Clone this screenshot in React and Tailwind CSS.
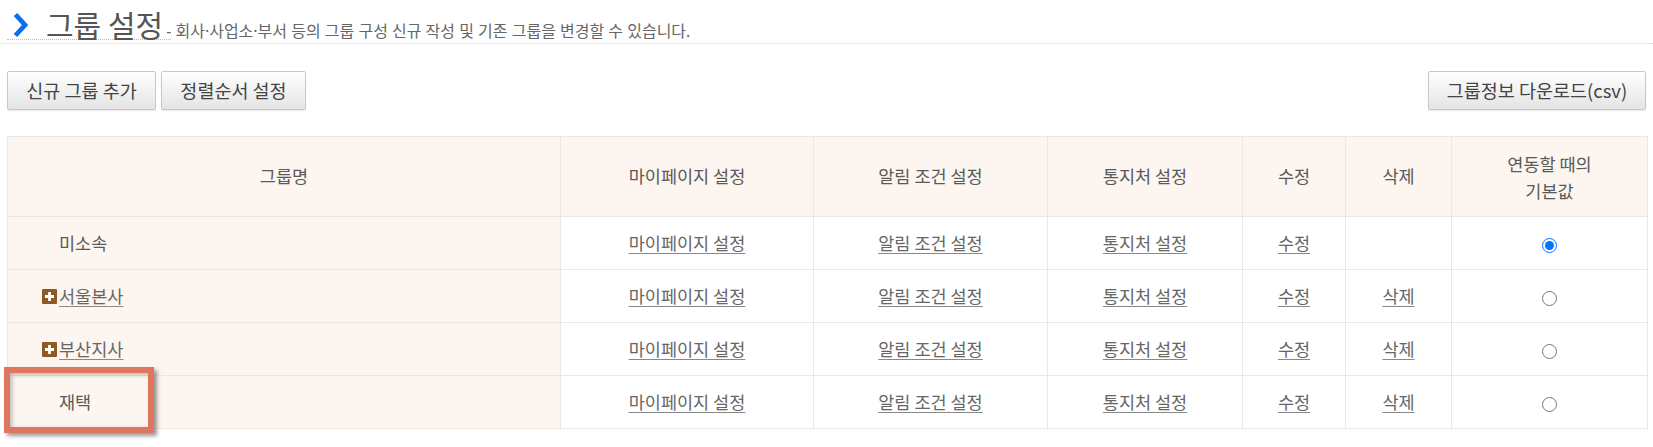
import React from 'react';

const rows = [
  { name: '미소속', hasChildren: false, link: false, canDelete: false, checked: true },
  { name: '서울본사', hasChildren: true, link: true, canDelete: true, checked: false },
  { name: '부산지사', hasChildren: true, link: true, canDelete: true, checked: false },
  { name: '재택', hasChildren: false, link: false, canDelete: true, checked: false, highlighted: true },
];

function PlusIcon() {
  return (
    <svg width="15" height="15" viewBox="0 0 15 15" className="shrink-0">
      <rect x="0" y="0" width="15" height="15" rx="1" fill="#8d5b22" />
      <path d="M7.5 3v9M3 7.5h9" stroke="#fff" strokeWidth="2.8" />
    </svg>
  );
}

function Chevron() {
  return (
    <svg width="15" height="26" viewBox="0 0 15 26" className="shrink-0">
      <path d="M2.5 2.5l9.5 10.5-9.5 10.5" fill="none" stroke="#0b6ef0" strokeWidth="4.8" strokeLinejoin="miter" />
    </svg>
  );
}

const linkCls = 'text-[#666] underline underline-offset-[3px] decoration-[#888] cursor-pointer';
const btnCls =
  'h-[39px] border border-[#c8c8c8] bg-gradient-to-b from-white to-[#e4e4e4] text-[18.5px] text-[#444] rounded-[2px] shadow-[0_1px_1px_rgba(0,0,0,0.08)]';

export default function App() {
  return (
    <div className="w-[1653px] h-[447px] bg-white overflow-hidden font-['Noto_Sans_CJK_KR','Noto_Sans',sans-serif]">
      {/* page title */}
      <div className="pt-[10px] pb-[3px] border-b border-dotted border-[#d4d4d4]">
        <div className="ml-[7px] w-[164px] h-[30px] flex items-baseline border-b border-dotted border-[#bdbdbd] whitespace-nowrap">
          <span className="self-center ml-[6px] mr-[18px] flex">
            <Chevron />
          </span>
          <h1 className="text-[30px] leading-[28px] text-[#555] font-normal">그룹 설정</h1>
          <span className="text-[16px] leading-none text-[#666] ml-[3px] font-['Noto_Sans','Noto_Sans_CJK_KR',sans-serif]">
            - 회사·사업소·부서 등의 그룹 구성 신규 작성 및 기존 그룹을 변경할 수 있습니다.
          </span>
        </div>
      </div>

      {/* buttons */}
      <div className="mt-[27px] px-[7px] flex justify-between">
        <div className="flex gap-[5px]">
          <button className={`${btnCls} w-[149px]`}>신규 그룹 추가</button>
          <button className={`${btnCls} w-[145px]`}>정렬순서 설정</button>
        </div>
        <button className={`${btnCls} w-[218px]`}>그룹정보 다운로드(csv)</button>
      </div>

      {/* group table */}
      <div className="mt-[26px] px-[7px]">
        <table className="w-[1640px] table-fixed border-collapse text-[17.5px] text-[#595959]">
          <colgroup>
            <col className="w-[553px]" />
            <col className="w-[253px]" />
            <col className="w-[234px]" />
            <col className="w-[195px]" />
            <col className="w-[103px]" />
            <col className="w-[106px]" />
            <col className="w-[196px]" />
          </colgroup>
          <thead>
            <tr className="h-[80px] bg-[#fdf5ef]">
              {['그룹명', '마이페이지 설정', '알림 조건 설정', '통지처 설정', '수정', '삭제'].map((h) => (
                <th key={h} className="border border-[#ebe7e4] font-normal text-center">{h}</th>
              ))}
              <th className="border border-[#ebe7e4] font-normal text-center leading-[27px]">
                연동할 때의
                <br />
                기본값
              </th>
            </tr>
          </thead>
          <tbody>
            {rows.map((r) => (
              <tr key={r.name} className="h-[53px]">
                <td className="relative border border-[#ebe7e4] bg-[#fdf5ef] pl-[34px]">
                  <div className="flex items-center gap-[2px]">
                    {r.hasChildren ? <PlusIcon /> : <span className="w-[15px]" />}
                    {r.link ? <span className={linkCls}>{r.name}</span> : <span>{r.name}</span>}
                  </div>
                  {r.highlighted && (
                    <div className="absolute left-[-4px] top-[-9px] w-[150px] h-[66px] border-[6px] border-[#df7660] shadow-[3px_3px_4px_rgba(0,0,0,0.4),inset_2px_2px_4px_rgba(0,0,0,0.25)] pointer-events-none" />
                  )}
                </td>
                <td className="border border-[#ebe7e4] text-center"><span className={linkCls}>마이페이지 설정</span></td>
                <td className="border border-[#ebe7e4] text-center"><span className={linkCls}>알림 조건 설정</span></td>
                <td className="border border-[#ebe7e4] text-center"><span className={linkCls}>통지처 설정</span></td>
                <td className="border border-[#ebe7e4] text-center"><span className={linkCls}>수정</span></td>
                <td className="border border-[#ebe7e4] text-center">
                  {r.canDelete && <span className={linkCls}>삭제</span>}
                </td>
                <td className="border border-[#ebe7e4] text-center">
                  <input type="radio" name="default-group" defaultChecked={r.checked} className="w-[15px] h-[15px] align-middle m-0" />
                </td>
              </tr>
            ))}
          </tbody>
        </table>
      </div>
    </div>
  );
}
